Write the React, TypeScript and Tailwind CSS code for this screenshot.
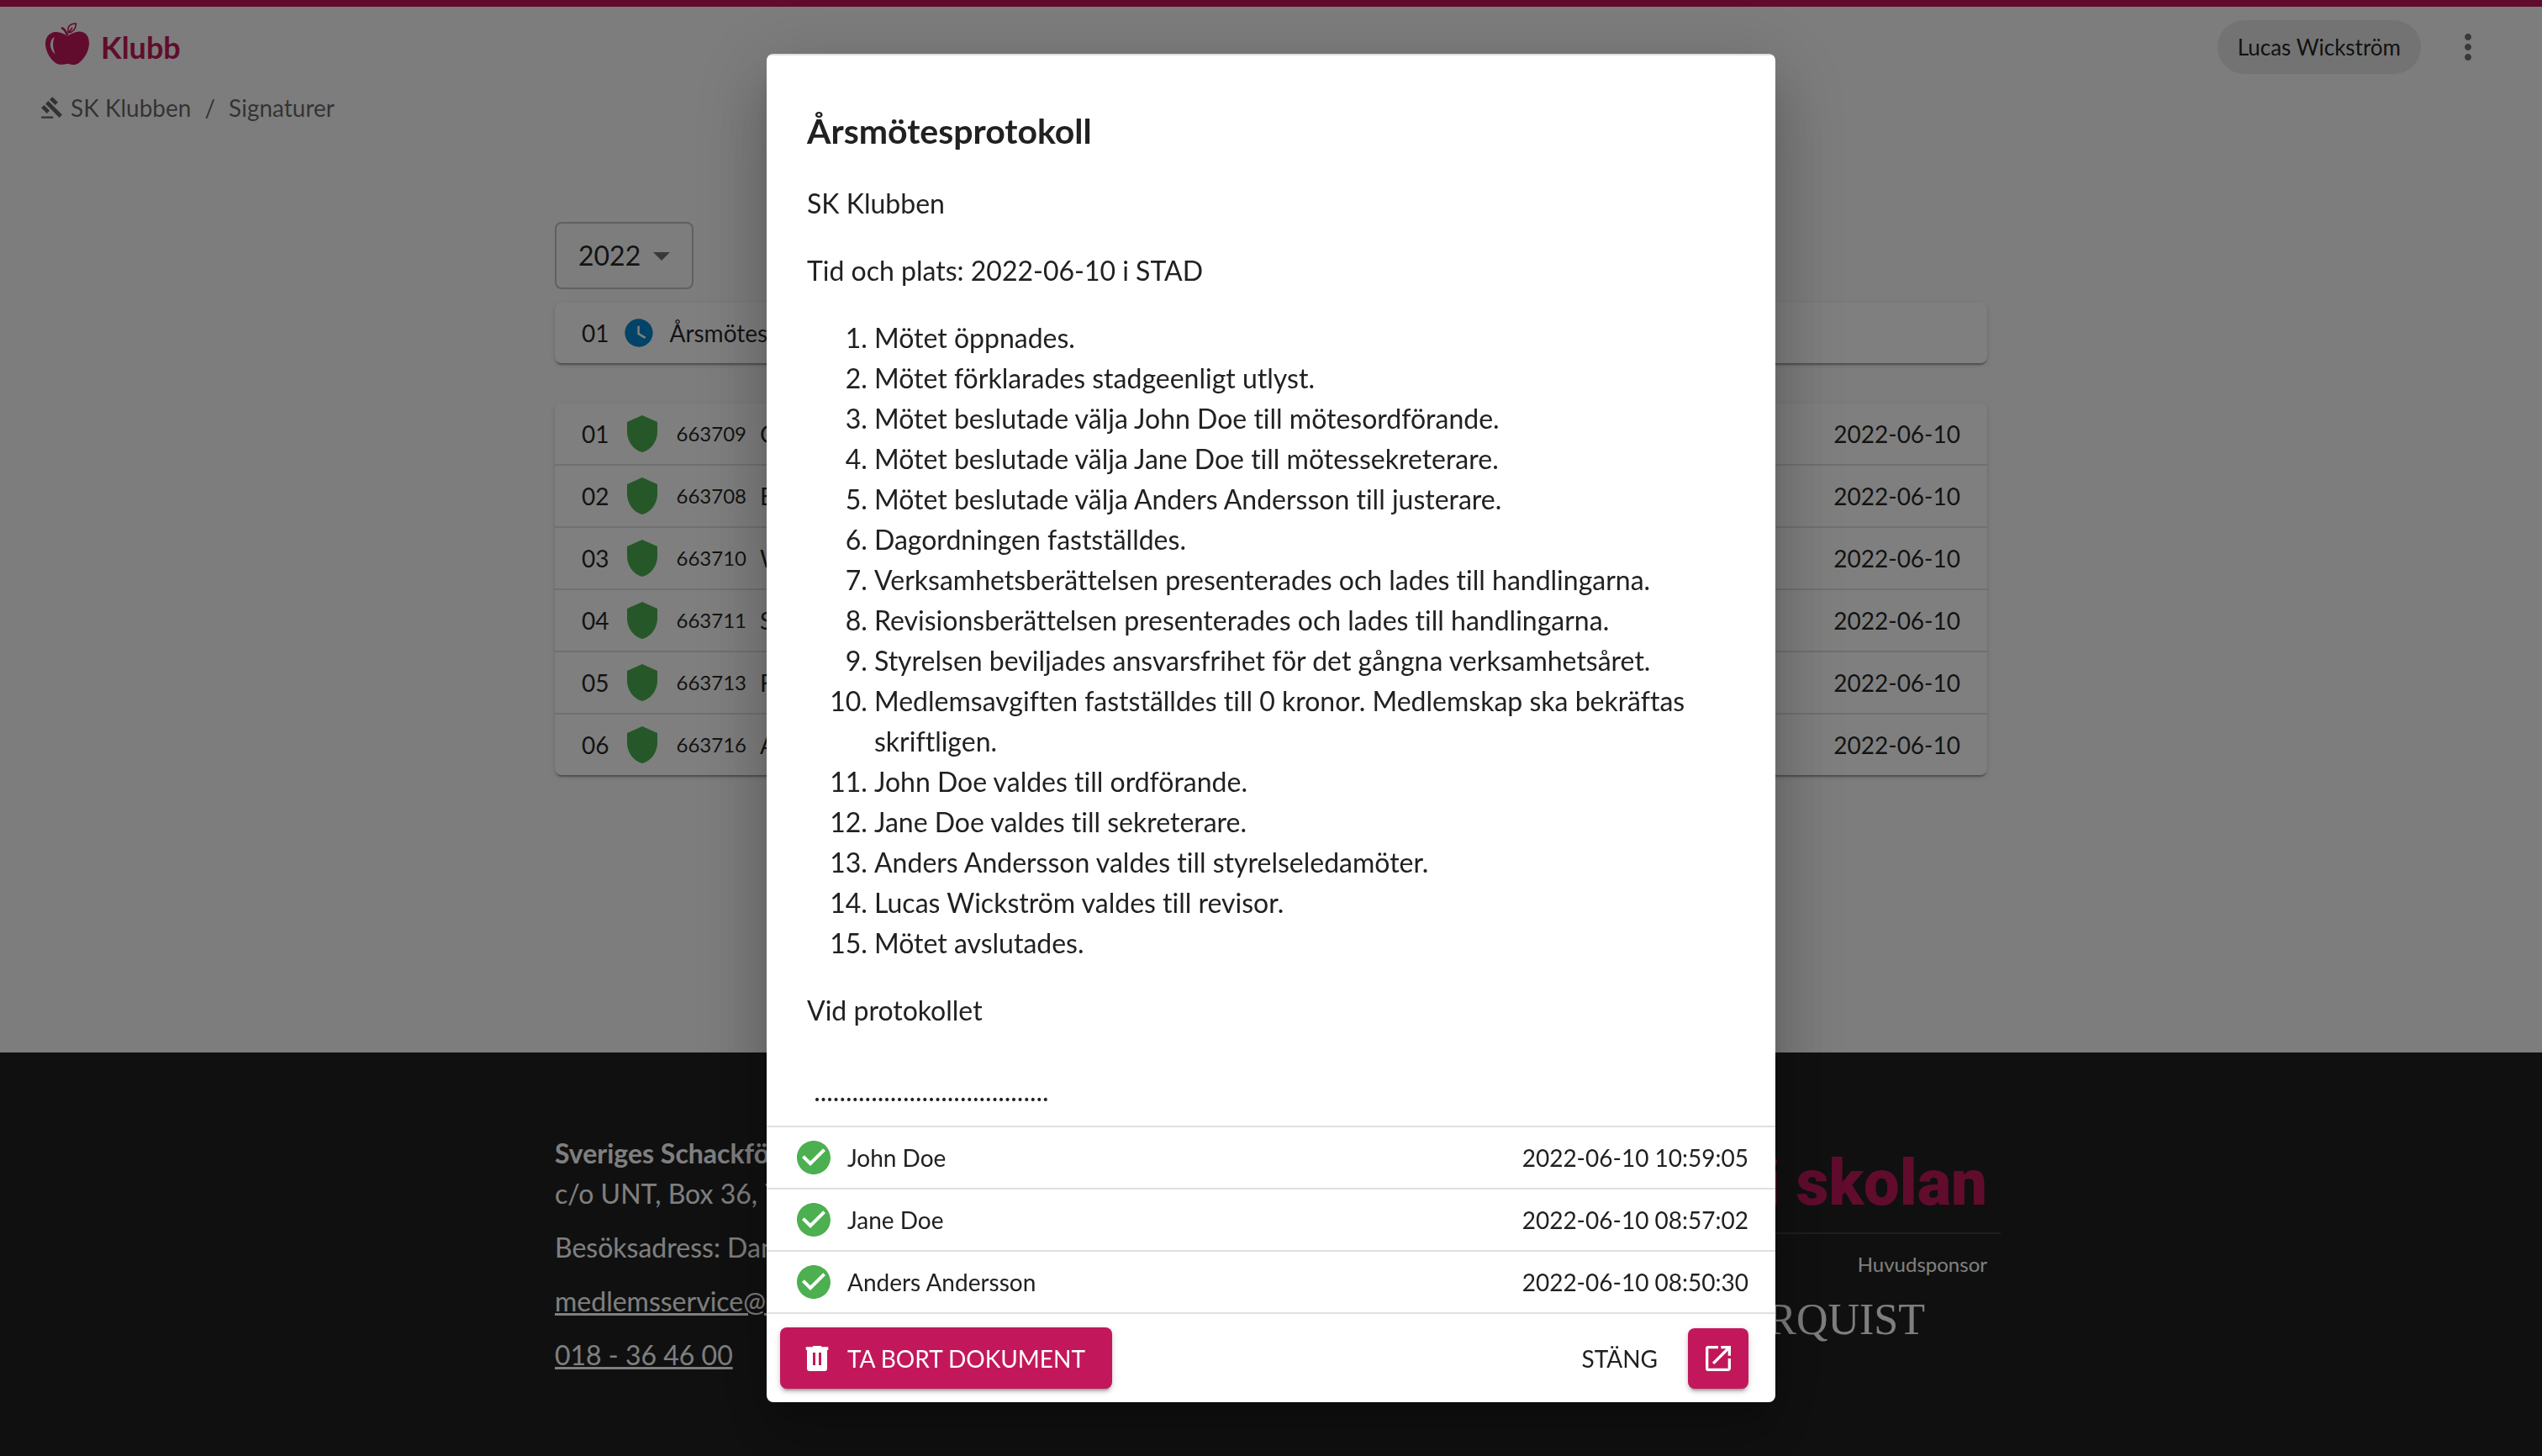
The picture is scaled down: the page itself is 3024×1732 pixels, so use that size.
import type { ReactNode } from 'react';
import {
  MdArrowDropDown,
  MdCheckCircle,
  MdGavel,
  MdLaunch,
  MdMoreVert,
  MdShield,
  MdWatchLater,
} from 'react-icons/md';

const members = [
  { nr: '01', id: '663709', name: 'C', date: '2022-06-10' },
  { nr: '02', id: '663708', name: 'E', date: '2022-06-10' },
  { nr: '03', id: '663710', name: 'W', date: '2022-06-10' },
  { nr: '04', id: '663711', name: 'S', date: '2022-06-10' },
  { nr: '05', id: '663713', name: 'F', date: '2022-06-10' },
  { nr: '06', id: '663716', name: 'A', date: '2022-06-10' },
];

const minutes = [
  'Mötet öppnades.',
  'Mötet förklarades stadgeenligt utlyst.',
  'Mötet beslutade välja John Doe till mötesordförande.',
  'Mötet beslutade välja Jane Doe till mötessekreterare.',
  'Mötet beslutade välja Anders Andersson till justerare.',
  'Dagordningen fastställdes.',
  'Verksamhetsberättelsen presenterades och lades till handlingarna.',
  'Revisionsberättelsen presenterades och lades till handlingarna.',
  'Styrelsen beviljades ansvarsfrihet för det gångna verksamhetsåret.',
  'Medlemsavgiften fastställdes till 0 kronor. Medlemskap ska bekräftas skriftligen.',
  'John Doe valdes till ordförande.',
  'Jane Doe valdes till sekreterare.',
  'Anders Andersson valdes till styrelseledamöter.',
  'Lucas Wickström valdes till revisor.',
  'Mötet avslutades.',
];

const signatures = [
  { name: 'John Doe', time: '2022-06-10 10:59:05' },
  { name: 'Jane Doe', time: '2022-06-10 08:57:02' },
  { name: 'Anders Andersson', time: '2022-06-10 08:50:30' },
];

function AppleLogo() {
  return (
    <svg viewBox="0 0 52 50" className="h-[50px] w-[52px]" fill="none" aria-hidden="true">
      <path
        fill="currentColor"
        d="M26 16C22 13 17 10.5 11.5 11C4 12 0 18 0 25C0 34 6 44 13 48.5C17 50.5 21 50 26.500 48.800C31 50 35 51 39 48.500C46 43.500 52 34 52 24.500C52 16 48 11 41 10.500C36 10.300 30.500 13 26 16Z"
      />
      <path fill="#fafafa" d="M11 17C4.500 20.500 3.800 31 11.700 37.500C8.800 30 8 24 11 17Z" />
      <path fill="currentColor" d="M18 6.300L20.500 5C24 7.500 26.500 11 27.800 15.500L25 15.500C23.500 11.500 21.500 9 18 6.300Z" />
      <path
        stroke="currentColor"
        strokeWidth="1.600"
        strokeLinejoin="round"
        d="M27.500 12C25.200 5 29.500 .8 36.500 1C36 7.500 33 11.500 27.500 12ZM27.500 12L32 6"
      />
    </svg>
  );
}

function TrashIcon() {
  return (
    <svg viewBox="0 0 40 40" className="size-10" fill="currentColor" aria-hidden="true">
      <path
        fillRule="evenodd"
        d="M15 5h10v1.300h8.300v3.700H32V32a3 3 0 0 1-3 3H11a3 3 0 0 1-3-3V10H6.700V6.300H15ZM15 13h3v15h-3ZM22 13h3v15h-3Z"
      />
    </svg>
  );
}

function Card({ children }: { children: ReactNode }) {
  return (
    <ul className="rounded-lg bg-white text-[28px] shadow-[0_4px_2px_-2px_rgba(0,0,0,0.2),0_2px_2px_rgba(0,0,0,0.14),0_2px_6px_rgba(0,0,0,0.12)]">
      {children}
    </ul>
  );
}

function Header() {
  return (
    <header className="border-t-8 border-[#c2185b] px-12">
      <div className="flex h-24 items-center">
        <a href="#" className="flex items-center gap-3.5 px-1.5 text-[#c2185b]">
          <span className="pb-2">
            <AppleLogo />
          </span>
          <span className="text-4xl font-bold">Klubb</span>
        </a>
        <div className="ml-auto flex items-center gap-4">
          <button type="button" className="h-16 rounded-full bg-black/8 px-6 text-[26px]">
            Lucas Wickström
          </button>
          <button type="button" aria-label="Meny" className="p-4 text-black/54">
            <MdMoreVert className="size-12" />
          </button>
        </div>
      </div>
      <nav aria-label="Sökväg" className="flex h-12 items-center text-[28px] text-black/60">
        <a href="#" className="flex items-center gap-2">
          <MdGavel className="size-7" />
          SK Klubben
        </a>
        <span className="mx-4">/</span>
        <a href="#">Signaturer</a>
      </nav>
    </header>
  );
}

function Main() {
  return (
    <main className="mx-auto flex w-full max-w-[1704px] flex-1 flex-col pt-28">
      <div className="relative self-start">
        <select
          aria-label="År"
          defaultValue="2022"
          className="h-20 appearance-none rounded-lg border-2 border-black/23 bg-transparent pr-[60px] pl-[26px] text-[32px]"
        >
          <option>2022</option>
        </select>
        <MdArrowDropDown className="pointer-events-none absolute top-4 right-3.5 size-12 text-black/54" />
      </div>
      <div className="mt-4 flex flex-col gap-12">
        <Card>
          <li className="flex h-[72px] items-center gap-4 px-8">
            <span>01</span>
            <MdWatchLater className="size-10 text-[#0288d1]" />
            <span>Årsmötesprotokoll</span>
          </li>
        </Card>
        <Card>
          {members.map((m) => (
            <li
              key={m.id}
              className="flex h-[74px] items-center gap-4 border-b-2 border-black/12 px-8 last:h-[72px] last:border-b-0"
            >
              <span>{m.nr}</span>
              <MdShield className="size-12 text-[#4caf50]" />
              <span className="text-2xl">{m.id}</span>
              <span>{m.name}</span>
              <span className="ml-auto">{m.date}</span>
            </li>
          ))}
        </Card>
      </div>
    </main>
  );
}

function Footer() {
  return (
    <footer className="bg-[#212121] py-24 text-[32px] leading-12 text-white">
      <div className="mx-auto flex max-w-[1736px] justify-between pl-4">
        <div className="flex flex-col items-start gap-4">
          <p>
            <strong>Sveriges Schackförbund</strong>
            <br />
            c/o UNT, Box 36, 751 03 Uppsala
          </p>
          <p>Besöksadress: Danmarksgatan 28</p>
          <a href="mailto:medlemsservice@schack.se" className="underline decoration-[3px]">
            medlemsservice@schack.se
          </a>
          <a href="tel:018364600" className="underline decoration-[3px]">
            018 - 36 46 00
          </a>
        </div>
        <div className="flex w-1/2 flex-col items-end">
          <p className="pt-5 pr-4 pb-5 font-[Roboto] text-[76px] leading-[78px] font-black text-[#c2185b]">
            i skolan
          </p>
          <hr className="w-full border-t-2 border-white/12" />
          <p className="pt-3 pr-4 text-2xl leading-12">Huvudsponsor</p>
          <p className="pt-0.5 pr-[90px] font-['Liberation_Serif'] text-[52px] leading-20">RQUIST</p>
        </div>
      </div>
    </footer>
  );
}

function MinutesDialog() {
  return (
    <div className="fixed inset-0 flex justify-center bg-black/50 py-16">
      <div
        role="dialog"
        aria-modal="true"
        aria-labelledby="dialog-title"
        className="flex w-full max-w-[1200px] flex-col overflow-hidden rounded-lg bg-white text-[#212121] shadow-[0_22px_30px_-14px_rgba(0,0,0,0.2),0_48px_76px_6px_rgba(0,0,0,0.14),0_18px_92px_16px_rgba(0,0,0,0.12)]"
      >
        <div className="flex min-h-0 flex-1 flex-col gap-8 overflow-hidden border-y-2 border-black/12 px-12 pt-15 text-[32px] leading-12">
          <h2 id="dialog-title" className="text-[41px] leading-[60px] font-bold">
            Årsmötesprotokoll
          </h2>
          <p>SK Klubben</p>
          <p>Tid och plats: 2022-06-10 i STAD</p>
          <ol className="list-decimal pl-20">
            {minutes.map((m) => (
              <li key={m}>{m}</li>
            ))}
          </ol>
          <p>
            Vid protokollet
            <br />
            <br />
            &nbsp;.....................................
          </p>
        </div>
        <ul className="text-[28px]">
          {signatures.map((s) => (
            <li key={s.name} className="flex h-[74px] items-center gap-4 border-b-2 border-black/12 px-8">
              <MdCheckCircle className="size-12 text-[#4caf50]" />
              <span>{s.name}</span>
              <span className="ml-auto">{s.time}</span>
            </li>
          ))}
        </ul>
        <div className="flex items-center py-4 pr-8 pl-4 text-[28px]">
          <button
            type="button"
            className="mr-auto flex h-[73px] items-center gap-4 rounded-lg bg-[#c2185b] pr-8 pl-6 text-white shadow-[0_6px_2px_-4px_rgba(0,0,0,0.2),0_4px_4px_rgba(0,0,0,0.14),0_2px_10px_rgba(0,0,0,0.12)]"
          >
            <TrashIcon />
            TA BORT DOKUMENT
          </button>
          <button type="button" className="mr-5 h-[73px] px-4">
            STÄNG
          </button>
          <button
            type="button"
            aria-label="Öppna"
            className="flex size-[72px] items-center justify-center rounded-lg bg-[#c2185b] text-white shadow-[0_6px_2px_-4px_rgba(0,0,0,0.2),0_4px_4px_rgba(0,0,0,0.14),0_2px_10px_rgba(0,0,0,0.12)]"
          >
            <MdLaunch className="size-10" />
          </button>
        </div>
      </div>
    </div>
  );
}

export default function App() {
  return (
    <div className="flex min-h-screen flex-col bg-[#fafafa] font-[Lato,sans-serif] text-black/87 [font-variant-ligatures:none]">
      <Header />
      <Main />
      <Footer />
      <MinutesDialog />
    </div>
  );
}
